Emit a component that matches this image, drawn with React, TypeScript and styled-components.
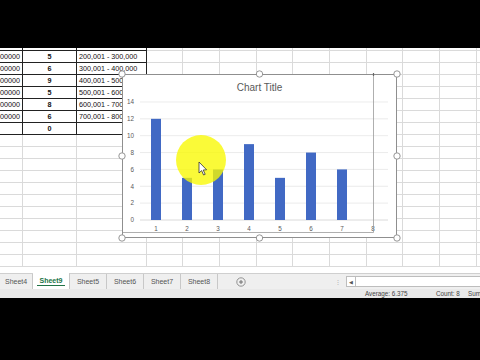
import styled, { createGlobalStyle } from "styled-components"

const GlobalStyle = createGlobalStyle`
  html, body { margin: 0; padding: 0; background: #000; }
  * { box-sizing: border-box; }
`

const COLS = [23, 54, 70, 36, 37, 37, 36, 37, 37, 36, 37, 37, 37]
const ROW_H = 12
const LIGHT = "#dadada"
const DARK = "#222"

const tableRows = [
  { a: "", b: "", c: "" },
  { a: "300000", b: "5", c: "200,001 - 300,000" },
  { a: "400000", b: "6", c: "300,001 - 400,000" },
  { a: "500000", b: "9", c: "400,001 - 500,000" },
  { a: "600000", b: "5", c: "500,001 - 600,000" },
  { a: "700000", b: "8", c: "600,001 - 700,000" },
  { a: "800000", b: "6", c: "700,001 - 800,000" },
  { a: "", b: "0", c: "" },
]

const values = [12, 5, 6, 9, 5, 8, 6, 0]
const tabs = ["Sheet4", "Sheet9", "Sheet5", "Sheet6", "Sheet7", "Sheet8"]

const Screen = styled.div`
  width: 480px;
  height: 360px;
  background: #000;
  display: flex;
  flex-direction: column;
  font-family: "Liberation Sans", Arial, sans-serif;
  overflow: hidden;
`

const Letterbox = styled.div<{ $h: number }>`
  height: ${({ $h }) => $h}px;
  flex-shrink: 0;
  background: #000;
`

const Sheet = styled.div`
  position: relative;
  height: 225px;
  background: #fff;
  overflow: hidden;
  flex-shrink: 0;
`

const Grid = styled.div`
  display: flex;
  flex-direction: column;
`

const Row = styled.div<{ $h: number }>`
  display: flex;
  height: ${({ $h }) => $h}px;
  flex-shrink: 0;
`

const Cell = styled.div<{ $w: number; $right: string; $bottom: string; $align: string; $bold?: boolean }>`
  width: ${({ $w }) => $w}px;
  flex-shrink: 0;
  display: flex;
  align-items: center;
  justify-content: ${({ $align }) => $align};
  padding: 0 2px;
  overflow: hidden;
  white-space: nowrap;
  border-right: 1px solid ${({ $right }) => $right};
  border-bottom: 1px solid ${({ $bottom }) => $bottom};
  font-size: 7.2px;
  font-weight: ${({ $bold }) => ($bold ? 700 : 400)};
  color: #111;
`

const ChartFrame = styled.div`
  position: absolute;
  left: 122px;
  top: 26px;
  width: 275px;
  height: 164px;
  background: #fff;
  border: 1px solid #8f8f8f;
`

const ChartTitle = styled.div`
  padding-top: 7px;
  text-align: center;
  font-size: 10px;
  line-height: 12px;
  color: #595959;
`

const ChartCanvas = styled.svg`
  position: absolute;
  left: -1px;
  top: -1px;
  overflow: visible;
`

const TabBar = styled.div`
  height: 16px;
  flex-shrink: 0;
  display: flex;
  align-items: stretch;
  background: #efefef;
  border-top: 1px solid #cfcfcf;
`

const Tab = styled.div<{ $w: number; $active?: boolean; $first?: boolean }>`
  width: ${({ $w }) => $w}px;
  display: flex;
  align-items: center;
  justify-content: ${({ $first }) => ($first ? "flex-start" : "center")};
  padding-left: ${({ $first }) => ($first ? 2 : 0)}px;
  padding-top: 1px;
  border-right: 1px solid #c8c8c8;
  background: ${({ $active }) => ($active ? "#fff" : "transparent")};
  margin-top: ${({ $active }) => ($active ? -1 : 0)}px;
  font-size: 7px;
  font-weight: ${({ $active }) => ($active ? 700 : 400)};
  color: ${({ $active }) => ($active ? "#217346" : "#555")};
`

const TabLabel = styled.span<{ $active?: boolean }>`
  padding: 0 3px 1px;
  border-bottom: 1.5px solid ${({ $active }) => ($active ? "#217346" : "transparent")};
`

const AddSheet = styled.div`
  margin-left: 18px;
  display: flex;
  align-items: center;
`

const Splitter = styled.div`
  margin-left: 90px;
  width: 4px;
  display: flex;
  align-items: center;
  justify-content: center;
  color: #aaa;
  font-size: 6px;
`

const ScrollArea = styled.div`
  flex: 1;
  display: flex;
  align-items: center;
  padding: 2px 0 2px 6px;
`

const ScrollButton = styled.div`
  width: 10px;
  height: 11px;
  border: 1px solid #bdbdbd;
  background: #fff;
  display: flex;
  align-items: center;
  justify-content: center;
  font-size: 5px;
  color: #555;
`

const ScrollTrack = styled.div`
  flex: 1;
  height: 11px;
  background: #fff;
  border-top: 1px solid #bdbdbd;
  border-bottom: 1px solid #bdbdbd;
`

const StatusBar = styled.div`
  height: 9px;
  flex-shrink: 0;
  display: flex;
  align-items: center;
  background: #e9e9e9;
  padding-left: 365px;
  font-size: 6.3px;
  color: #444;
  white-space: nowrap;
  overflow: hidden;
`

const StatusItem = styled.span<{ $w: number }>`
  width: ${({ $w }) => $w}px;
  flex-shrink: 0;
`

function SheetGrid() {
  const rows = []
  const totalRows = 19
  for (let r = 0; r < totalRows; r++) {
    const inTable = r < tableRows.length
    const data = inTable ? tableRows[r] : null
    rows.push(
      <Row key={r} $h={r === 0 ? 3 : ROW_H}>
        {COLS.map((w, c) => {
          const dark = inTable && c < 3
          let text = ""
          let align = "flex-start"
          if (data) {
            if (c === 0) { text = data.a; align = "flex-end" }
            if (c === 1) { text = data.b; align = "center" }
            if (c === 2) text = data.c
          }
          return (
            <Cell
              key={c}
              $w={w}
              $right={dark ? DARK : LIGHT}
              $bottom={dark ? DARK : LIGHT}
              $align={align}
              $bold={c === 1}
            >
              {text}
            </Cell>
          )
        })}
      </Row>
    )
  }
  return <Grid>{rows}</Grid>
}

function Chart() {
  const W = 275
  const H = 164
  const y = (v: number) => 146 - v * 8.43
  const cx = (i: number) => 34 + i * 31
  const handles = [
    [0, 0], [W / 2, 0], [W, 0],
    [0, H / 2], [W, H / 2],
    [0, H], [W / 2, H], [W, H],
  ]
  return (
    <ChartFrame>
      <ChartTitle>Chart Title</ChartTitle>
      <ChartCanvas width={W} height={H} viewBox={`0 0 ${W} ${H}`}>
        {[0, 2, 4, 6, 8, 10, 12, 14].map((v) => (
          <g key={v}>
            <line x1={18} x2={266} y1={y(v)} y2={y(v)} stroke={v === 0 ? "#d0d0d0" : "#e6e6e6"} strokeWidth={0.8} />
            <text x={12} y={y(v) + 2.3} textAnchor="end" fontSize={6.3} fill="#595959" fontFamily="Liberation Sans, Arial, sans-serif">{v}</text>
          </g>
        ))}
        {values.map((v, i) => (
          <g key={i}>
            {v > 0 && <rect x={cx(i) - 5} y={y(v)} width={10} height={v * 8.43} fill="#4169c4" />}
            <text x={cx(i)} y={157} textAnchor="middle" fontSize={6.3} fill="#595959" fontFamily="Liberation Sans, Arial, sans-serif">{i + 1}</text>
          </g>
        ))}
        <path d="M251.5,1 V158.5 H1" fill="none" stroke="#9a9a9a" strokeWidth={0.8} />
        <line x1={251.5} x2={251.5} y1={-1} y2={2} stroke="#666" strokeWidth={1.2} />
        <circle cx={79} cy={86} r={25} fill="rgba(248,248,0,0.78)" />
        <path d="M77,88 L77,99 L79.6,96.6 L81.6,101 L83.2,100.3 L81.2,96 L84.6,95.8 Z" fill="#fff" stroke="#333" strokeWidth={0.8} strokeLinejoin="round" />
        {handles.map(([hx, hy], i) => (
          <circle key={i} cx={hx} cy={hy} r={3.2} fill="#fff" stroke="#8a8a8a" strokeWidth={0.9} />
        ))}
      </ChartCanvas>
    </ChartFrame>
  )
}

export default function App() {
  return (
    <Screen>
      <GlobalStyle />
      <Letterbox $h={48} />
      <Sheet>
        <SheetGrid />
        <Chart />
      </Sheet>
      <TabBar>
        {tabs.map((t, i) => (
          <Tab key={t} $w={i === 0 ? 33 : 37} $active={i === 1} $first={i === 0}>
            <TabLabel $active={i === 1}>{t}</TabLabel>
          </Tab>
        ))}
        <AddSheet>
          <svg width={10} height={10} viewBox="0 0 10 10">
            <circle cx={5} cy={5} r={4.2} fill="none" stroke="#888" strokeWidth={0.9} />
            <path d="M5,3 V7 M3,5 H7" stroke="#666" strokeWidth={0.9} />
          </svg>
        </AddSheet>
        <Splitter>⋮</Splitter>
        <ScrollArea>
          <ScrollButton>◀</ScrollButton>
          <ScrollTrack />
        </ScrollArea>
      </TabBar>
      <StatusBar>
        <StatusItem $w={71}>Average: 6.375</StatusItem>
        <StatusItem $w={32}>Count: 8</StatusItem>
        <StatusItem $w={20}>Sum</StatusItem>
      </StatusBar>
      <Letterbox $h={62} />
    </Screen>
  )
}
